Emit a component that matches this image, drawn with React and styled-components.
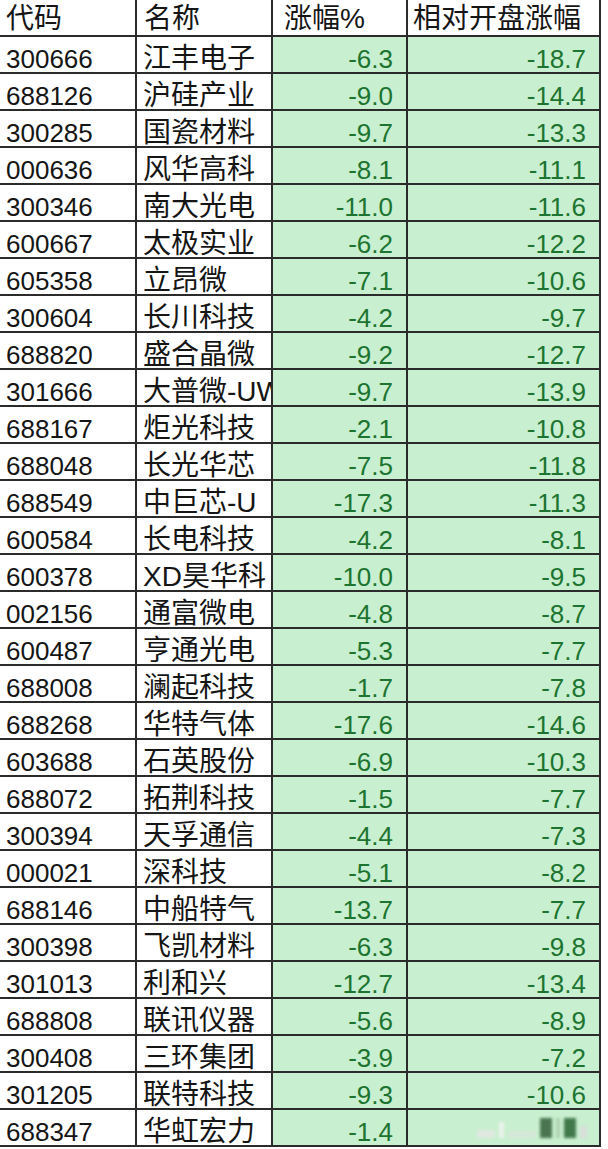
import React from "react";
import styled, { createGlobalStyle } from "styled-components";

const GlobalStyle = createGlobalStyle`
  html, body {
    margin: 0;
    padding: 0;
    background: #ffffff;
  }
`;

const rows = [
  ["300666", "江丰电子", "-6.3", "-18.7"],
  ["688126", "沪硅产业", "-9.0", "-14.4"],
  ["300285", "国瓷材料", "-9.7", "-13.3"],
  ["000636", "风华高科", "-8.1", "-11.1"],
  ["300346", "南大光电", "-11.0", "-11.6"],
  ["600667", "太极实业", "-6.2", "-12.2"],
  ["605358", "立昂微", "-7.1", "-10.6"],
  ["300604", "长川科技", "-4.2", "-9.7"],
  ["688820", "盛合晶微", "-9.2", "-12.7"],
  ["301666", "大普微-UW", "-9.7", "-13.9"],
  ["688167", "炬光科技", "-2.1", "-10.8"],
  ["688048", "长光华芯", "-7.5", "-11.8"],
  ["688549", "中巨芯-U", "-17.3", "-11.3"],
  ["600584", "长电科技", "-4.2", "-8.1"],
  ["600378", "XD昊华科", "-10.0", "-9.5"],
  ["002156", "通富微电", "-4.8", "-8.7"],
  ["600487", "亨通光电", "-5.3", "-7.7"],
  ["688008", "澜起科技", "-1.7", "-7.8"],
  ["688268", "华特气体", "-17.6", "-14.6"],
  ["603688", "石英股份", "-6.9", "-10.3"],
  ["688072", "拓荆科技", "-1.5", "-7.7"],
  ["300394", "天孚通信", "-4.4", "-7.3"],
  ["000021", "深科技", "-5.1", "-8.2"],
  ["688146", "中船特气", "-13.7", "-7.7"],
  ["300398", "飞凯材料", "-6.3", "-9.8"],
  ["301013", "利和兴", "-12.7", "-13.4"],
  ["688808", "联讯仪器", "-5.6", "-8.9"],
  ["300408", "三环集团", "-3.9", "-7.2"],
  ["301205", "联特科技", "-9.3", "-10.6"],
  ["688347", "华虹宏力", "-1.4", ""],
];

const Sheet = styled.div`
  display: grid;
  grid-template-columns: 137px 136px 135px 193px;
  grid-auto-rows: 37px;
  width: 601px;
  font-family: "Liberation Sans", "Noto Sans CJK SC", sans-serif;
  color: #111;
`;

const Cell = styled.div`
  position: relative;
  box-sizing: border-box;
  height: 37px;
  padding: 8px ${(p) => (p.$num ? "13px" : "0")} 0 ${(p) => (p.$num ? "0" : "6px")};
  line-height: 28px;
  font-size: ${(p) => (p.$cjk ? "28px" : "26px")};
  text-align: ${(p) => (p.$num ? "right" : "left")};
  white-space: nowrap;
  overflow: hidden;
  border-right: 2px solid #2b2b2b;
  border-bottom: 2px solid #2b2b2b;
  background: ${(p) => (p.$green ? "#c8efcf" : "#ffffff")};
  color: ${(p) => (p.$green ? "#1c7430" : "#151515")};
`;

const HeadCell = styled(Cell)`
  font-size: 28px;
  padding-top: 5px;
  padding-left: ${(p) => p.$pl || "6px"};
  text-align: left;
`;

const Watermark = styled.span`
  position: absolute;
  right: 12px;
  top: 8px;
  display: flex;
  align-items: flex-end;
  gap: 4px;
  filter: blur(1.5px);
  opacity: 0.85;
`;

const Mark = styled.i`
  display: block;
  width: ${(p) => p.$w}px;
  height: ${(p) => p.$h}px;
  background: ${(p) => p.$c};
`;

export default function App() {
  return (
    <>
      <GlobalStyle />
      <Sheet>
        <HeadCell>代码</HeadCell>
        <HeadCell $pl="7px">名称</HeadCell>
        <HeadCell $pl="11px">涨幅%</HeadCell>
        <HeadCell $pl="5px">相对开盘涨幅</HeadCell>
        {rows.map((r) => (
          <React.Fragment key={r[0]}>
            <Cell>{r[0]}</Cell>
            <Cell $cjk>{r[1]}</Cell>
            <Cell $num $green>{r[2]}</Cell>
            <Cell $num $green>
              {r[3] || (
                <Watermark>
                  <Mark $w={18} $h={8} $c="#e4e8e4" />
                  <Mark $w={5} $h={16} $c="#f2f2f2" />
                  <Mark $w={28} $h={7} $c="#d9e7da" />
                  <Mark $w={12} $h={20} $c="#345f3a" />
                  <Mark $w={4} $h={20} $c="#a9cdb0" />
                  <Mark $w={12} $h={20} $c="#2a6535" />
                  <Mark $w={7} $h={12} $c="#dcdcdc" />
                </Watermark>
              )}
            </Cell>
          </React.Fragment>
        ))}
      </Sheet>
    </>
  );
}
